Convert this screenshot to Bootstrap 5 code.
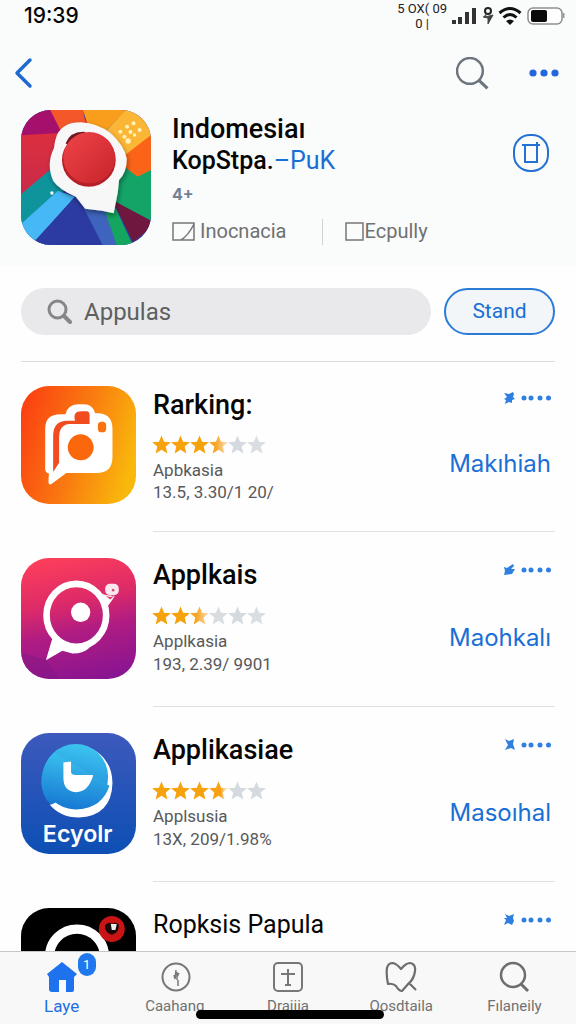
<!DOCTYPE html>
<html lang="id">
<head>
<meta charset="utf-8">
<meta name="viewport" content="width=device-width, initial-scale=1">
<title>Indomesiaı</title>
<link href="https://cdn.jsdelivr.net/npm/bootstrap@5.3.0/dist/css/bootstrap.min.css" rel="stylesheet">
<style>
  :root { --ink: #060606; --accent: #1a6fd6; --quiet: #6f7173; }
  body { font-family: Roboto, "Liberation Sans", sans-serif; color: var(--ink); background: #fefefe; }
  svg { display: block; flex: none; }
  a { color: inherit; text-decoration: none; }
  .top-area { background: #fafbfb; padding-bottom: 14px; }
  .status { height: 32px; padding: 0 10px 0 24px; }
  .clock { font: 500 21px/32px Inter, sans-serif; }
  .carrier { font-size: 13px; line-height: 15px; text-align: center; color: #222; }
  .toolbar { height: 78px; padding: 4px 17px 0 13px; }
  .icon-btn { background: none; border: 0; padding: 0; color: var(--accent); }
  .side { padding-left: 21px; padding-right: 21px; }
  .hero-art { width: 130px; height: 135px; border-radius: 30px; }
  .hero-text { margin-left: 21px; padding-top: 4px; }
  .hero-name { font-size: 27px; line-height: 31px; font-weight: 500; margin: 0; }
  .hero-name span { display: block; font-size: 25px; }
  .hero-name b { font-weight: 400; color: var(--accent); }
  .age { font: 700 16px/32px Inter, sans-serif; color: #718096; height: 35px; padding-top: 2px; }
  .meta { font-size: 20px; line-height: 41px; color: var(--quiet); }
  .meta-sep { width: 1px; height: 26px; background: #cfd2d3; margin: 0 22px 0 35px; }
  .trash-btn { padding-right: 4px; }
  .search-row { padding-top: 22px; padding-bottom: 26px; gap: 13px; }
  .search-pill { background: #e9e9eb; border-radius: 24px; height: 47px; padding-left: 26px; color: #848688; }
  .search-pill input { background: none; border: 0; outline: 0; min-width: 0; font-size: 24px; color: #5d5f61; padding: 0 12px; }
  .search-pill input::placeholder { color: #5d5f61; opacity: 1; }
  .go-btn { width: 111px; height: 47px; border: 2px solid #2c7cd6; border-radius: 24px; background: #f2f6f9; color: var(--accent); font-size: 21px; padding: 0; }
  .rule { border-top: 1px solid #dadddd; }
  .app-item { gap: 17px; }
  .app-art { width: 115px; height: 121px; border-radius: 28px; margin: 26px 0 28px; }
  .app-body { border-bottom: 1px solid #dfe1e2; padding-top: 25px; }
  .app-name { font-size: 27px; line-height: 36px; font-weight: 500; margin: 0; }
  .app-name.light-name { font-size: 25px; font-weight: 400; }
  .stars { height: 20px; margin: 13px 0 4px -1px; }
  .stars svg { width: 19px; height: 20px; }
  .app-info { font-size: 17px; line-height: 23px; color: #58595b; margin: 0; }
  .app-side { padding: 6px 4px 0 0; }
  .get-btn { background: none; border: 0; padding: 0; font: 400 24px/32px Inter, sans-serif; color: var(--accent); margin-top: 45px; }
  .app-item:first-of-type .app-art { height: 118px; margin: 24px 0 28px; }
  .app-item:first-of-type .stars { margin-top: 12px; }
  .app-item:first-of-type .app-info { line-height: 22px; }
  .app-item:first-of-type .app-side { padding-top: 4px; }
  .app-item:first-of-type .get-btn { margin-top: 43px; }
  .scroller { overflow-y: auto; scrollbar-width: none; min-height: 0; }
  .scroller::-webkit-scrollbar { display: none; }
  .tabs { background: #f8f8f8; border-top: 1px solid #c5c6c7; padding: 8px 5px 5px; color: var(--quiet); }
  .tab-link { font-size: 15px; line-height: 25px; flex: 1 1 0; }
  .tab-link.active { font-size: 17px; color: #1f6fe5; }
  .tab-badge { position: absolute; left: 16px; top: -7px; width: 18px; height: 23px; border-radius: 9px; background: #1f78ee; color: #fff; font-size: 13px; line-height: 23px; text-align: center; }
  .home-bar { position: absolute; left: 34%; right: 33.3%; bottom: 5px; height: 9px; border-radius: 5px; background: #000; }
</style>
</head>
<body class="vh-100 d-flex flex-column overflow-hidden">

<svg width="0" height="0" class="position-absolute" aria-hidden="true">
  <defs>
    <linearGradient id="half"><stop offset=".35" stop-color="#f8a524"/><stop offset="1" stop-color="#fbe0bd"/></linearGradient>
    <linearGradient id="most"><stop offset=".6" stop-color="#f8a010"/><stop offset=".85" stop-color="#fbdcae"/></linearGradient>
    <symbol id="star" viewBox="0 0 20 20"><path d="M10 0l2.7 6.6 7.2.5-5.500 4.600 1.800 7.300-6.200-3.900L3.800 19l1.800-7.300L.1 7.100l7.200-.5z"/></symbol>
    <symbol id="lens" viewBox="0 0 32 32"><circle cx="13.500" cy="13.500" r="12.500" fill="none" stroke="currentColor" stroke-width="2.400"/><path d="M22 22.500l8.500 8" stroke="currentColor" stroke-width="3"/></symbol>
    <symbol id="dots" viewBox="0 0 48 14"><g fill="#2f7fe0"><circle cx="21" cy="7" r="2.500"/><circle cx="28" cy="7" r="2.500"/><circle cx="37" cy="7" r="2.500"/><circle cx="45.500" cy="7" r="2.500"/></g></symbol>
  </defs>
</svg>

<main class="scroller flex-grow-1">
  <header class="top-area">
    <div class="status d-flex align-items-center justify-content-between">
      <span class="clock">19:39</span>
      <div class="d-flex align-items-center">
        <span class="carrier me-1">5 OX( 09<br>0 |</span>
        <svg width="26" height="18" viewBox="0 0 26 18" fill="#333"><rect x="1" y="13" width="4" height="4"/><rect x="7" y="10" width="4" height="7"/><rect x="14" y="5" width="4" height="12"/><rect x="21" y="1" width="4" height="16"/></svg>
        <svg class="ms-1" width="13" height="20" viewBox="0 0 13 20"><circle cx="7" cy="5" r="3" fill="none" stroke="#222" stroke-width="2"/><path d="M6 7l-2 4 8-2-5 9V12l-5-1" fill="#444" stroke="#444"/></svg>
        <svg class="ms-1" width="24" height="20" viewBox="0 0 24 20" fill="none" stroke="#111" stroke-width="3"><path d="M1.500 7q10.500-9 21 0M5.500 11.500q6.500-6 13 0"/><path d="M8 15q4-3 8 0l-4 4z" fill="#111" stroke="none"/></svg>
        <svg class="ms-1" width="40" height="20" viewBox="0 0 40 20"><rect x="2" y="2" width="34" height="16" rx="5" fill="#fff" stroke="#8e8e8e" stroke-width="1.500"/><rect x="5" y="4" width="16" height="12" rx="2" fill="#0a0a0a"/><path d="M37.500 7v5" stroke="#999" stroke-width="2"/></svg>
      </div>
    </div>

    <div class="toolbar d-flex align-items-center">
      <button class="icon-btn me-auto" aria-label="Kembali"><svg width="22" height="32" viewBox="0 0 22 32"><path d="M17 3L4 16l13 13" fill="none" stroke="#1f69d2" stroke-width="3.500" stroke-linecap="round" stroke-linejoin="round"/></svg></button>
      <button class="icon-btn text-secondary" aria-label="Cari"><svg width="33" height="33"><use href="#lens"/></svg></button>
      <button class="icon-btn ps-4 ms-3" aria-label="Lainnya"><svg width="30" height="10" fill="#2467da"><circle cx="4" cy="5" r="3.600"/><circle cx="15" cy="5" r="3.600"/><circle cx="26" cy="5" r="3.600"/></svg></button>
    </div>

    <div class="side d-flex">
      <svg class="hero-art" viewBox="33 30 387 405" preserveAspectRatio="none" aria-hidden="true">
        <defs>
          <linearGradient id="ha" x2="0" y2="1"><stop stop-color="#e0303c"/><stop offset="1" stop-color="#c92a4a"/></linearGradient>
          <linearGradient id="hb" x2="1" y2="1"><stop stop-color="#ef4448"/><stop offset="1" stop-color="#c8242c"/></linearGradient>
          <filter id="soft" x="-20%" y="-20%" width="150%" height="150%"><feDropShadow dx="3" dy="8" stdDeviation="8" flood-opacity=".4"/></filter>
        </defs>
        <rect x="33" y="30" width="387" height="405" fill="#2b3fa6"/>
        <path d="M33 105L230 60V200L33 285z" fill="url(#ha)"/>
        <path d="M33 30h90l40 68-130 8z" fill="#a5106c"/>
        <path d="M120 30h97l13 60-75 10z" fill="#f4572a"/>
        <path d="M217 30h130L250 130z" fill="#f99d1c"/>
        <path d="M345 30h75v80L300 220 270 110z" fill="#fbb636"/>
        <path d="M420 105v110l-40 18-60-50z" fill="#fb6418"/>
        <path d="M300 170l80 60 40-20v152L300 300z" fill="#14a468"/>
        <path d="M33 283l92-78 50 55L33 375z" fill="#0f949c"/>
        <path d="M33 372l110-100 50 18-115 130-45-10z" fill="#46b8f5"/>
        <path d="M76 421L200 285l75 150H80z" fill="#2c3ba2"/>
        <path d="M200 285l90 40 34 110h-48z" fill="#3e64bd"/>
        <path d="M275 310h33l58 125h-48z" fill="#14a65e"/>
        <path d="M305 300l115 62v20l-53 45z" fill="#6f173d"/>
        <path filter="url(#soft)" d="M140 105q18-38 70-38 50 2 90 33 40 37 48 76 0 40-23 64l-4 38-12 62-35-8-50-6-28-36q-48-20-67-47-22-50 2-98 2-22 9-40z" fill="#f7f7f8"/>
        <path d="M166 130q15-38 60-34l-40 50z" fill="#6d1723"/>
        <circle cx="235" cy="180" r="80" fill="#b61f27"/><circle cx="236" cy="173" r="77" fill="url(#hb)"/>
        <path d="M250 263q35 2 55-28-15 30-42 30z" fill="#fff"/>
        <g fill="#fff3b8"><circle cx="329" cy="95" r="6"/><circle cx="349" cy="80" r="6"/><circle cx="368" cy="70" r="6"/><circle cx="341" cy="110" r="6"/><circle cx="359" cy="96" r="6"/><circle cx="386" cy="90" r="6"/><circle cx="352" cy="123" r="8"/><circle cx="371" cy="105" r="5"/></g>
        <circle cx="125" cy="279" r="5" fill="#fff"/>
      </svg>
      <div class="hero-text flex-grow-1">
        <h1 class="hero-name">Indomesiaı<span>KopStpa.<b>–PuK</b></span></h1>
        <div class="age">4+</div>
        <div class="meta d-flex align-items-center">
          <svg class="me-1" width="24" height="20" viewBox="0 0 24 20" fill="none" stroke="#777" stroke-width="1.500"><path d="M1 1h21v17H1zM9 18q7-4 13-16"/></svg><span>Inocnacia</span>
          <span class="meta-sep"></span>
          <svg width="20" height="20" viewBox="0 0 20 20" fill="none" stroke="#777" stroke-width="1.500"><path d="M1 1h17v17H1z"/></svg><span>Ecpully</span>
        </div>
      </div>
      <button class="icon-btn trash-btn align-self-start pt-4" aria-label="Hapus"><svg width="39" height="38" viewBox="0 0 39 38" fill="none" stroke="#2470d4" stroke-width="2"><rect x="2" y="1" width="34" height="36" rx="16"/><path d="M10 11h18M13 11v17h12V11M25 8v3"/></svg></button>
    </div>
  </header>

  <form class="search-row side d-flex">
    <div class="search-pill d-flex align-items-center flex-grow-1">
      <svg width="25" height="25" viewBox="0 0 25 25" fill="none" stroke="currentColor" stroke-width="3"><circle cx="10.500" cy="10.500" r="8.500"/><path d="M17 17l6 6" stroke-width="4" stroke-linecap="round"/></svg>
      <input class="flex-grow-1" type="text" aria-label="Cari aplikasi" placeholder="Appulas">
    </div>
    <button class="go-btn" type="button">Stand</button>
  </form>

  <section class="side">
    <div class="rule"></div>
    <article class="app-item d-flex">
      <svg class="app-art" viewBox="33 32 347 354" preserveAspectRatio="none" aria-hidden="true">
        <defs><linearGradient id="or" x1="0" y1=".3" x2="1" y2=".6"><stop stop-color="#fb4312"/><stop offset=".5" stop-color="#f97a10"/><stop offset="1" stop-color="#f9b90c"/></linearGradient></defs>
        <rect x="33" y="32" width="347" height="354" fill="url(#or)"/>
        <path d="M106 290V160q0-43 46-43h15q8-30 38-30h18q26 0 34 27h12q40 3 40 48v82q0 49-48 49h-91l-45 33q-10 5-9-10l1-22q-11-2-11-14z" fill="#fff"/>
        <path d="M130 290V178q2-42 42-42h24q-8-28 20-28h14q10 0 10 12v26h-60q-32 2-32 40v76z" fill="#f14c20"/>
        <circle cx="213" cy="216" r="39" fill="#fa670c"/><rect x="265" y="139" width="25" height="32" rx="11" fill="#fa720f"/>
      </svg>
      <div class="app-body flex-grow-1 d-flex justify-content-between">
        <div>
          <h2 class="app-name">Rarking:</h2>
          <div class="stars d-flex" role="img" aria-label="3,5"><svg fill="#f6a20c"><use href="#star"/></svg><svg fill="#f6a20c"><use href="#star"/></svg><svg fill="#f6a20c"><use href="#star"/></svg><svg fill="url(#half)"><use href="#star"/></svg><svg fill="#d5d9e0"><use href="#star"/></svg><svg fill="#dadde2"><use href="#star"/></svg></div>
          <p class="app-info">Apbkasia</p><p class="app-info">13.5, 3.30/1 20/</p>
        </div>
        <div class="app-side d-flex flex-column align-items-end">
          <svg width="48" height="14" viewBox="0 0 48 14"><use href="#dots"/><path d="M1 2l5 1 4-2 1 2-1 3 2 2-3 1v3l-3-1-4 2 1-4-2-1 3-2z" fill="#2f7fe0"/></svg>
          <button class="get-btn">Makıhiah</button>
        </div>
      </div>
    </article>

    <article class="app-item d-flex">
      <svg class="app-art" viewBox="33 38 347 361" preserveAspectRatio="none" aria-hidden="true">
        <defs><linearGradient id="pk" x1=".4" y1="0" x2=".6" y2="1"><stop stop-color="#fb3d5c"/><stop offset=".35" stop-color="#dd2a68"/><stop offset=".6" stop-color="#b01c82"/><stop offset="1" stop-color="#8a1590"/></linearGradient></defs>
        <rect x="33" y="38" width="347" height="361" fill="url(#pk)"/>
        <path d="M108 343l42 56H33v-80z" fill="#7c1685" opacity=".4"/>
        <ellipse cx="200" cy="209" rx="90" ry="94" fill="none" stroke="#fff" stroke-width="20"/>
        <path d="M130 270l-22 73 50-28 30 8q36 0 52-18l-60-6z" fill="#fff"/>
        <circle cx="213" cy="200" r="29" fill="#fff"/>
        <path d="M266 140l20 8q20 4 30 4l-24 34-12-4z" fill="#fff"/><path d="M288 150q15 8 28 0l-14 12z" fill="#e53a60"/>
        <rect x="287" y="115" width="41" height="34" rx="14" fill="#fbe8ee"/><circle cx="311" cy="134" r="4" fill="#d64a72"/>
      </svg>
      <div class="app-body flex-grow-1 d-flex justify-content-between">
        <div>
          <h2 class="app-name">Applkais</h2>
          <div class="stars d-flex" role="img" aria-label="2,5"><svg fill="#f6a20c"><use href="#star"/></svg><svg fill="#f6a20c"><use href="#star"/></svg><svg fill="url(#half)"><use href="#star"/></svg><svg fill="#dadde0"><use href="#star"/></svg><svg fill="#d5d9e0"><use href="#star"/></svg><svg fill="#dadde2"><use href="#star"/></svg></div>
          <p class="app-info">Applkasia</p><p class="app-info">193, 2.39/ 9901</p>
        </div>
        <div class="app-side d-flex flex-column align-items-end">
          <svg width="48" height="14" viewBox="0 0 48 14"><use href="#dots"/><path d="M1 4l3 1 6-4 1 2-3 3h4l-3 5-8 1 1-4z" fill="#2f7fe0"/></svg>
          <button class="get-btn">Maohkalı</button>
        </div>
      </div>
    </article>

    <article class="app-item d-flex">
      <svg class="app-art" viewBox="33 32 347 362" preserveAspectRatio="none" aria-hidden="true">
        <defs><linearGradient id="bl" x2="0" y2="1"><stop stop-color="#3d59bc"/><stop offset="1" stop-color="#0d4fb4"/></linearGradient><linearGradient id="cy" x1=".6" y1="0" x2=".4" y2="1"><stop stop-color="#3cc4f0"/><stop offset="1" stop-color="#1678d2"/></linearGradient></defs>
        <rect x="33" y="32" width="347" height="362" fill="url(#bl)"/>
        <path d="M230 72q78 30 79 110-3 98-102 103-55 0-87-38l28-14z" fill="#fff"/>
        <circle cx="198" cy="163" r="98" fill="url(#cy)"/>
        <path d="M94 180q2-60 40-90l166 100q-22 66-94 70-36 0-58-25l-24 12q-28-24-30-67z" fill="url(#cy)"/>
        <path d="M161 120l23-3v32q1 9 13 9h54q-14 51-52 51-38-2-38-42z" fill="#fff"/>
        <text x="99" y="357" fill="#fff" font-family="Inter, sans-serif" font-weight="600" font-size="70">Ecyolr</text>
      </svg>
      <div class="app-body flex-grow-1 d-flex justify-content-between">
        <div>
          <h2 class="app-name">Applikasiae</h2>
          <div class="stars d-flex" role="img" aria-label="4"><svg fill="#f6a20c"><use href="#star"/></svg><svg fill="#f6a20c"><use href="#star"/></svg><svg fill="#f6a20c"><use href="#star"/></svg><svg fill="url(#most)"><use href="#star"/></svg><svg fill="#d5d9e0"><use href="#star"/></svg><svg fill="#d5d9e0"><use href="#star"/></svg></div>
          <p class="app-info">Applsusia</p><p class="app-info">13X, 209/1.98%</p>
        </div>
        <div class="app-side d-flex flex-column align-items-end">
          <svg width="48" height="14" viewBox="0 0 48 14"><use href="#dots"/><path d="M2 1l4 2 5-2-1 5 2 6-4-2-6 2 3-5z" fill="#2f7fe0"/></svg>
          <button class="get-btn">Masoıhal</button>
        </div>
      </div>
    </article>

    <article class="app-item d-flex">
      <svg class="app-art" viewBox="33 36 347 362" preserveAspectRatio="none" aria-hidden="true">
        <rect x="33" y="36" width="347" height="362" fill="#000"/>
        <circle cx="202" cy="182" r="83" fill="none" stroke="#fff" stroke-width="28"/>
        <path d="M195 168q15-6 35 0z" fill="#bbb"/>
        <circle cx="307" cy="99" r="39" fill="#c81414"/><path d="M286 88q12-14 22-4 12-8 20 2 2 24-20 30-22-6-22-28z" fill="#180808"/><path d="M304 84l18 0-4 18-11 0z" fill="#eee"/>
      </svg>
      <div class="app-body flex-grow-1 d-flex justify-content-between">
        <h2 class="app-name light-name">Ropksis Papula</h2>
        <div class="app-side">
          <svg width="48" height="14" viewBox="0 0 48 14"><use href="#dots"/><path d="M2 1l4 2 5-2-1 4 1 3-2 4-4-2-4 2 2-5-2-2h3z" fill="#2f7fe0"/></svg>
        </div>
      </div>
    </article>
  </section>
</main>

<nav class="tabs d-flex position-relative">
  <a href="#" class="tab-link active d-flex flex-column align-items-center">
    <span class="position-relative"><svg width="32" height="34" viewBox="0 0 32 34" fill="#1f72ee"><path d="M16 2l15 12-3 3v13q0 2-2 2h-6V20h-7v12H6q-3 0-3-3V17l-2-3z"/></svg><span class="tab-badge ms-3">1</span></span>Laye</a>
  <a href="#" class="tab-link d-flex flex-column align-items-center">
    <svg width="32" height="34" viewBox="0 0 32 34" fill="none" stroke="#757779" stroke-width="2"><circle cx="17" cy="17" r="13.500"/><path d="M17 10l-1 9M18 12v8M20 13l-2 4M15 15l1 4M19 20v6" stroke-width="1.500"/></svg>Caahang</a>
  <a href="#" class="tab-link d-flex flex-column align-items-center">
    <svg width="32" height="34" viewBox="0 0 32 34" fill="none" stroke="#757779" stroke-width="2"><rect x="2" y="3" width="28" height="28" rx="4"/><path d="M16 9v16M9 14h14M13 25h6"/></svg>Draiiia</a>
  <a href="#" class="tab-link d-flex flex-column align-items-center">
    <svg width="32" height="34" viewBox="0 0 32 34" fill="none" stroke="#6b6d6f" stroke-width="2.200" stroke-linejoin="round"><path d="M3 24Q1 14 2 8q1-5 6-5 4 1 8 6 5-6 9-6 6 1 5 8-1 8-6 12l-7 8q-3 0-6-5-3-3-8-2zM24 23l7 7"/></svg>Oosdtaila</a>
  <a href="#" class="tab-link d-flex flex-column align-items-center">
    <svg width="32" height="34" viewBox="0 0 32 34" fill="none" stroke="#6b6d6f" stroke-width="2.500"><circle cx="15" cy="15" r="12"/><path d="M23 24l7 7" stroke-width="3"/></svg>Fılaneily</a>
  <div class="home-bar"></div>
</nav>

<script src="https://cdn.jsdelivr.net/npm/bootstrap@5.3.0/dist/js/bootstrap.bundle.min.js"></script>
</body>
</html>
